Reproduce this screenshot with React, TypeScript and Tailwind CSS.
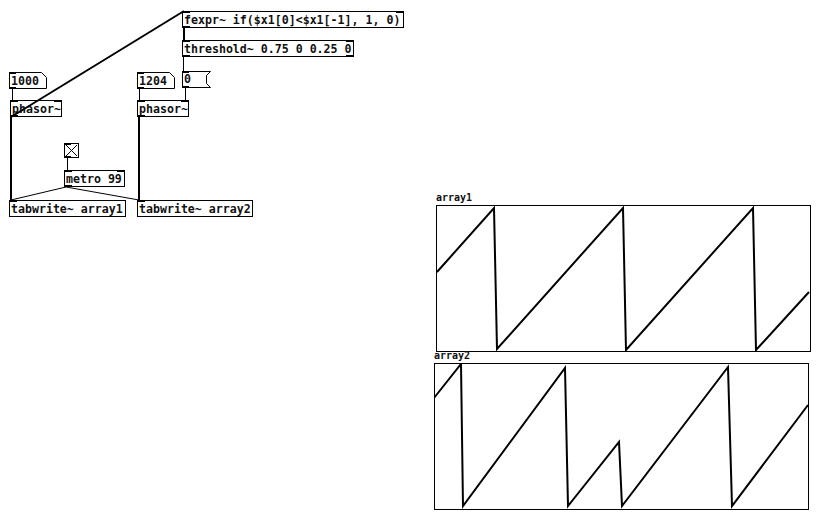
import React from "react";

// Pd patch canvas: every box sits at its own spot on the canvas, like the editor does.
const mono = { fontFamily: '"DejaVu Sans Mono", "Liberation Mono", monospace' };

const Nubs = ({ ins = [], outs = [] }: { ins?: string[]; outs?: string[] }) => (
  <>
    {ins.map((c, i) => (
      <span key={"i" + i} className={"absolute top-[-1px] h-[2px] w-[7px] bg-black " + c} />
    ))}
    {outs.map((c, i) => (
      <span key={"o" + i} className={"absolute bottom-[-1px] h-[2px] w-[7px] bg-black " + c} />
    ))}
  </>
);

const PdObject = ({
  pos,
  text,
  ins = [],
  outs = [],
}: {
  pos: string;
  text: string;
  ins?: string[];
  outs?: string[];
}) => (
  <div
    className={
      "absolute h-[17px] border border-black bg-white pl-[1px] text-[11.6px] font-bold leading-[17px] text-[#111] whitespace-nowrap " +
      pos
    }
    style={mono}
  >
    {text}
    <Nubs ins={ins} outs={outs} />
  </div>
);

const NumBox = ({ pos, text }: { pos: string; text: string }) => (
  <div className={"absolute w-[38px] h-[17px] " + pos}>
    <svg width="38" height="17" className="absolute inset-0">
      <path d="M0.5 0.5 H32.5 L37.5 5.5 V16.5 H0.5 Z" fill="white" stroke="black" />
      <rect x="0" y="0" width="7" height="2" fill="black" />
      <rect x="0" y="15" width="7" height="2" fill="black" />
    </svg>
    <span className="absolute left-[2px] top-[1px] text-[11.6px] font-bold leading-[17px] text-[#111]" style={mono}>
      {text}
    </span>
  </div>
);

const MsgBox = ({ pos, text }: { pos: string; text: string }) => (
  <div className={"absolute w-[30px] h-[17px] " + pos}>
    <svg width="30" height="17" className="absolute inset-0">
      <path d="M0.5 0.5 H28.5 L24.5 4.5 V12.5 L28.5 16.5 H0.5 Z" fill="white" stroke="black" />
      <rect x="0" y="0" width="7" height="2" fill="black" />
      <rect x="0" y="15" width="7" height="2" fill="black" />
    </svg>
    <span className="absolute left-[2px] top-[0px] text-[11.6px] font-bold leading-[17px] text-[#111]" style={mono}>
      {text}
    </span>
  </div>
);

const Toggle = ({ pos }: { pos: string }) => (
  <svg className={"absolute " + pos} width="15" height="15">
    <rect x="0.5" y="0.5" width="14" height="14" fill="white" stroke="black" />
    <path d="M2 2 L13 13 M13 2 L2 13" stroke="black" strokeWidth="1" />
    <rect x="0" y="0" width="7" height="2" fill="black" />
    <rect x="0" y="13" width="7" height="2" fill="black" />
  </svg>
);

const ArrayGraph = ({ pos, name, points }: { pos: string; name: string; points: string }) => (
  <div className={"absolute flex flex-col " + pos}>
    <div className="h-[13px] text-[10px] font-bold leading-[12px] text-[#111]" style={mono}>
      {name}
    </div>
    <svg width="375" height="147">
      <rect x="0.5" y="0.5" width="374" height="146" fill="white" stroke="black" />
      <polyline points={points} fill="none" stroke="black" strokeWidth="2" />
    </svg>
  </div>
);

export default function App() {
  return (
    <div className="relative w-[822px] h-[512px] bg-white overflow-hidden">
      <PdObject
        pos="left-[182px] top-[11px] w-[222px]"
        text="fexpr~ if($x1[0]<$x1[-1], 1, 0)"
        ins={["left-0", "right-0"]}
        outs={["left-0"]}
      />
      <PdObject
        pos="left-[182px] top-[40px] w-[172px]"
        text="threshold~ 0.75 0 0.25 0"
        ins={["left-0", "right-0"]}
        outs={["left-0", "right-0"]}
      />
      <MsgBox pos="left-[182px] top-[71px]" text="0" />
      <NumBox pos="left-[9px] top-[72px]" text="1000" />
      <NumBox pos="left-[137px] top-[72px]" text="1204" />
      <PdObject pos="left-[10px] top-[100px] w-[52px]" text="phasor~" ins={["left-0", "right-0"]} outs={["left-0"]} />
      <PdObject pos="left-[137px] top-[100px] w-[52px]" text="phasor~" ins={["left-0", "right-0"]} outs={["left-0"]} />
      <Toggle pos="left-[64px] top-[143px]" />
      <PdObject pos="left-[64px] top-[170px] w-[61px]" text="metro 99" ins={["left-0", "right-0"]} outs={["left-0"]} />
      <PdObject pos="left-[9px] top-[200px] w-[117px]" text="tabwrite~ array1" ins={["left-0"]} />
      <PdObject pos="left-[137px] top-[200px] w-[116px]" text="tabwrite~ array2" ins={["left-0"]} />

      {/* patch cords */}
      <svg className="absolute inset-0 pointer-events-none" width="822" height="512">
        <g stroke="black" strokeWidth="2" fill="none">
          <line x1="11" y1="117" x2="184" y2="11" />
          <line x1="11" y1="117" x2="11" y2="200" />
          <line x1="139" y1="117" x2="139" y2="200" />
          <line x1="184" y1="28" x2="184" y2="40" />
        </g>
        <g stroke="black" strokeWidth="1" fill="none">
          <line x1="12.5" y1="89" x2="12.5" y2="100" />
          <line x1="139.5" y1="89" x2="139.5" y2="100" />
          <line x1="183.5" y1="57" x2="183.5" y2="71" />
          <line x1="185.5" y1="88" x2="185.5" y2="100" />
          <line x1="67.5" y1="158" x2="67.5" y2="170" />
          <line x1="66" y1="187" x2="11" y2="200" />
          <line x1="66" y1="187" x2="139" y2="200" />
        </g>
      </svg>

      <ArrayGraph
        pos="left-[436px] top-[192px]"
        name="array1"
        points="1,67 58,3 61,144 187,3 190,145 317,3 320,145 373,87"
      />
      <ArrayGraph
        pos="left-[434px] top-[350px]"
        name="array2"
        points="0,35 27,1 29,143 131,5 134,143 185,79 188,143 294,4 298,143 374,42"
      />
    </div>
  );
}
